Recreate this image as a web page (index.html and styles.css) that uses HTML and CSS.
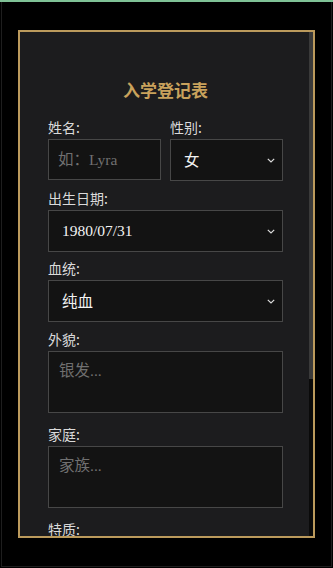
FILE: index.html
```html
<!DOCTYPE html>
<html lang="zh">
<head>
<meta charset="utf-8">
<title>入学登记表</title>
<link rel="stylesheet" href="styles.css">
</head>
<body>
<div class="screen">
  <div class="frame">
    <div class="modal">
      <div class="modal-body">
        <h2 class="title">入学登记表</h2>
        <div class="row">
          <div class="field">
            <label class="label">姓名:</label>
            <input class="control input" type="text" placeholder="如：Lyra">
          </div>
          <div class="field">
            <label class="label">性别:</label>
            <div class="select-wrap">
              <select class="control select"><option>女</option><option>男</option></select>
              <svg class="chev" width="8" height="5" viewBox="0 0 8 5"><polyline points="0.8,0.8 4,4 7.2,0.8" fill="none" stroke="#dcdcdc" stroke-width="1.2"/></svg>
            </div>
          </div>
        </div>
        <div class="field">
          <label class="label">出生日期:</label>
          <div class="select-wrap">
            <select class="control select"><option>1980/07/31</option></select>
            <svg class="chev" width="8" height="5" viewBox="0 0 8 5"><polyline points="0.8,0.8 4,4 7.2,0.8" fill="none" stroke="#dcdcdc" stroke-width="1.2"/></svg>
          </div>
        </div>
        <div class="field">
          <label class="label">血统:</label>
          <div class="select-wrap">
            <select class="control select"><option>纯血</option><option>混血</option><option>麻瓜出身</option></select>
            <svg class="chev" width="8" height="5" viewBox="0 0 8 5"><polyline points="0.8,0.8 4,4 7.2,0.8" fill="none" stroke="#dcdcdc" stroke-width="1.2"/></svg>
          </div>
        </div>
        <div class="field field-area">
          <label class="label">外貌:</label>
          <textarea class="control area" placeholder="银发..."></textarea>
        </div>
        <div class="field field-area">
          <label class="label">家庭:</label>
          <textarea class="control area" placeholder="家族..."></textarea>
        </div>
        <div class="field field-area">
          <label class="label">特质:</label>
          <textarea class="control area" placeholder="性格..."></textarea>
        </div>
      </div>
      <div class="scrollbar"><div class="thumb"></div></div>
    </div>
  </div>
</div>
</body>
</html>
```
FILE: styles.css
```css
html, body {
  margin: 0;
  padding: 0;
  background: #000;
  height: 568px;
  overflow: hidden;
}

.screen {
  height: 568px;
  box-sizing: border-box;
  border-top: 2px solid #7fc196;
}

.frame {
  margin: 0 1px;
  height: 564px;
  border: 1px solid #1e1e1e;
  border-top: none;
  display: flex;
  flex-direction: column;
}

.modal {
  margin: 28px 16px 0 16px;
  width: 297px;
  height: 508px;
  box-sizing: border-box;
  border: 2px solid #bb9a5c;
  background: #1c1c1e;
  display: flex;
}

.modal-body {
  flex: 1;
  min-width: 0;
  overflow: hidden;
  box-sizing: border-box;
  padding: 46px 26px 0 28px;
  font-family: "Noto Sans CJK SC", "Noto Sans", sans-serif;
}

.scrollbar {
  width: 4px;
  flex: none;
  background: #0a0a0a;
  display: flex;
  flex-direction: column;
}

.thumb {
  height: 347px;
  background: #3a3a3a;
}

.title {
  margin: 0 0 16px 0;
  text-align: center;
  font-size: 17px;
  line-height: 24px;
  font-weight: 700;
  color: #c9a25c;
}

.row {
  display: grid;
  grid-template-columns: 1fr 1fr;
  column-gap: 9px;
}

.field {
  margin-bottom: 7.5px;
}

.field-area {
  margin-bottom: 12px;
}

.label {
  display: block;
  font-size: 14px;
  line-height: 19px;
  margin-bottom: 2px;
  color: #dadada;
}

.control {
  display: block;
  width: 100%;
  box-sizing: border-box;
  margin: 0;
  border: 1px solid #474747;
  border-radius: 0;
  background: #131313;
  color: #f2f2f2;
  font-family: "Liberation Serif", "Noto Sans CJK SC", serif;
  font-size: 15.5px;
  outline: none;
}

.input {
  height: 41px;
  padding: 0 9px;
}

.control::placeholder {
  color: #707070;
}

.select-wrap {
  position: relative;
}

.select {
  height: 42px;
  padding: 0 24px 0 13px;
  -webkit-appearance: none;
  appearance: none;
}

.chev {
  position: absolute;
  right: 8px;
  top: 19px;
}

.area {
  height: 62px;
  padding: 8px 10px;
  line-height: 22px;
  resize: none;
}
```
